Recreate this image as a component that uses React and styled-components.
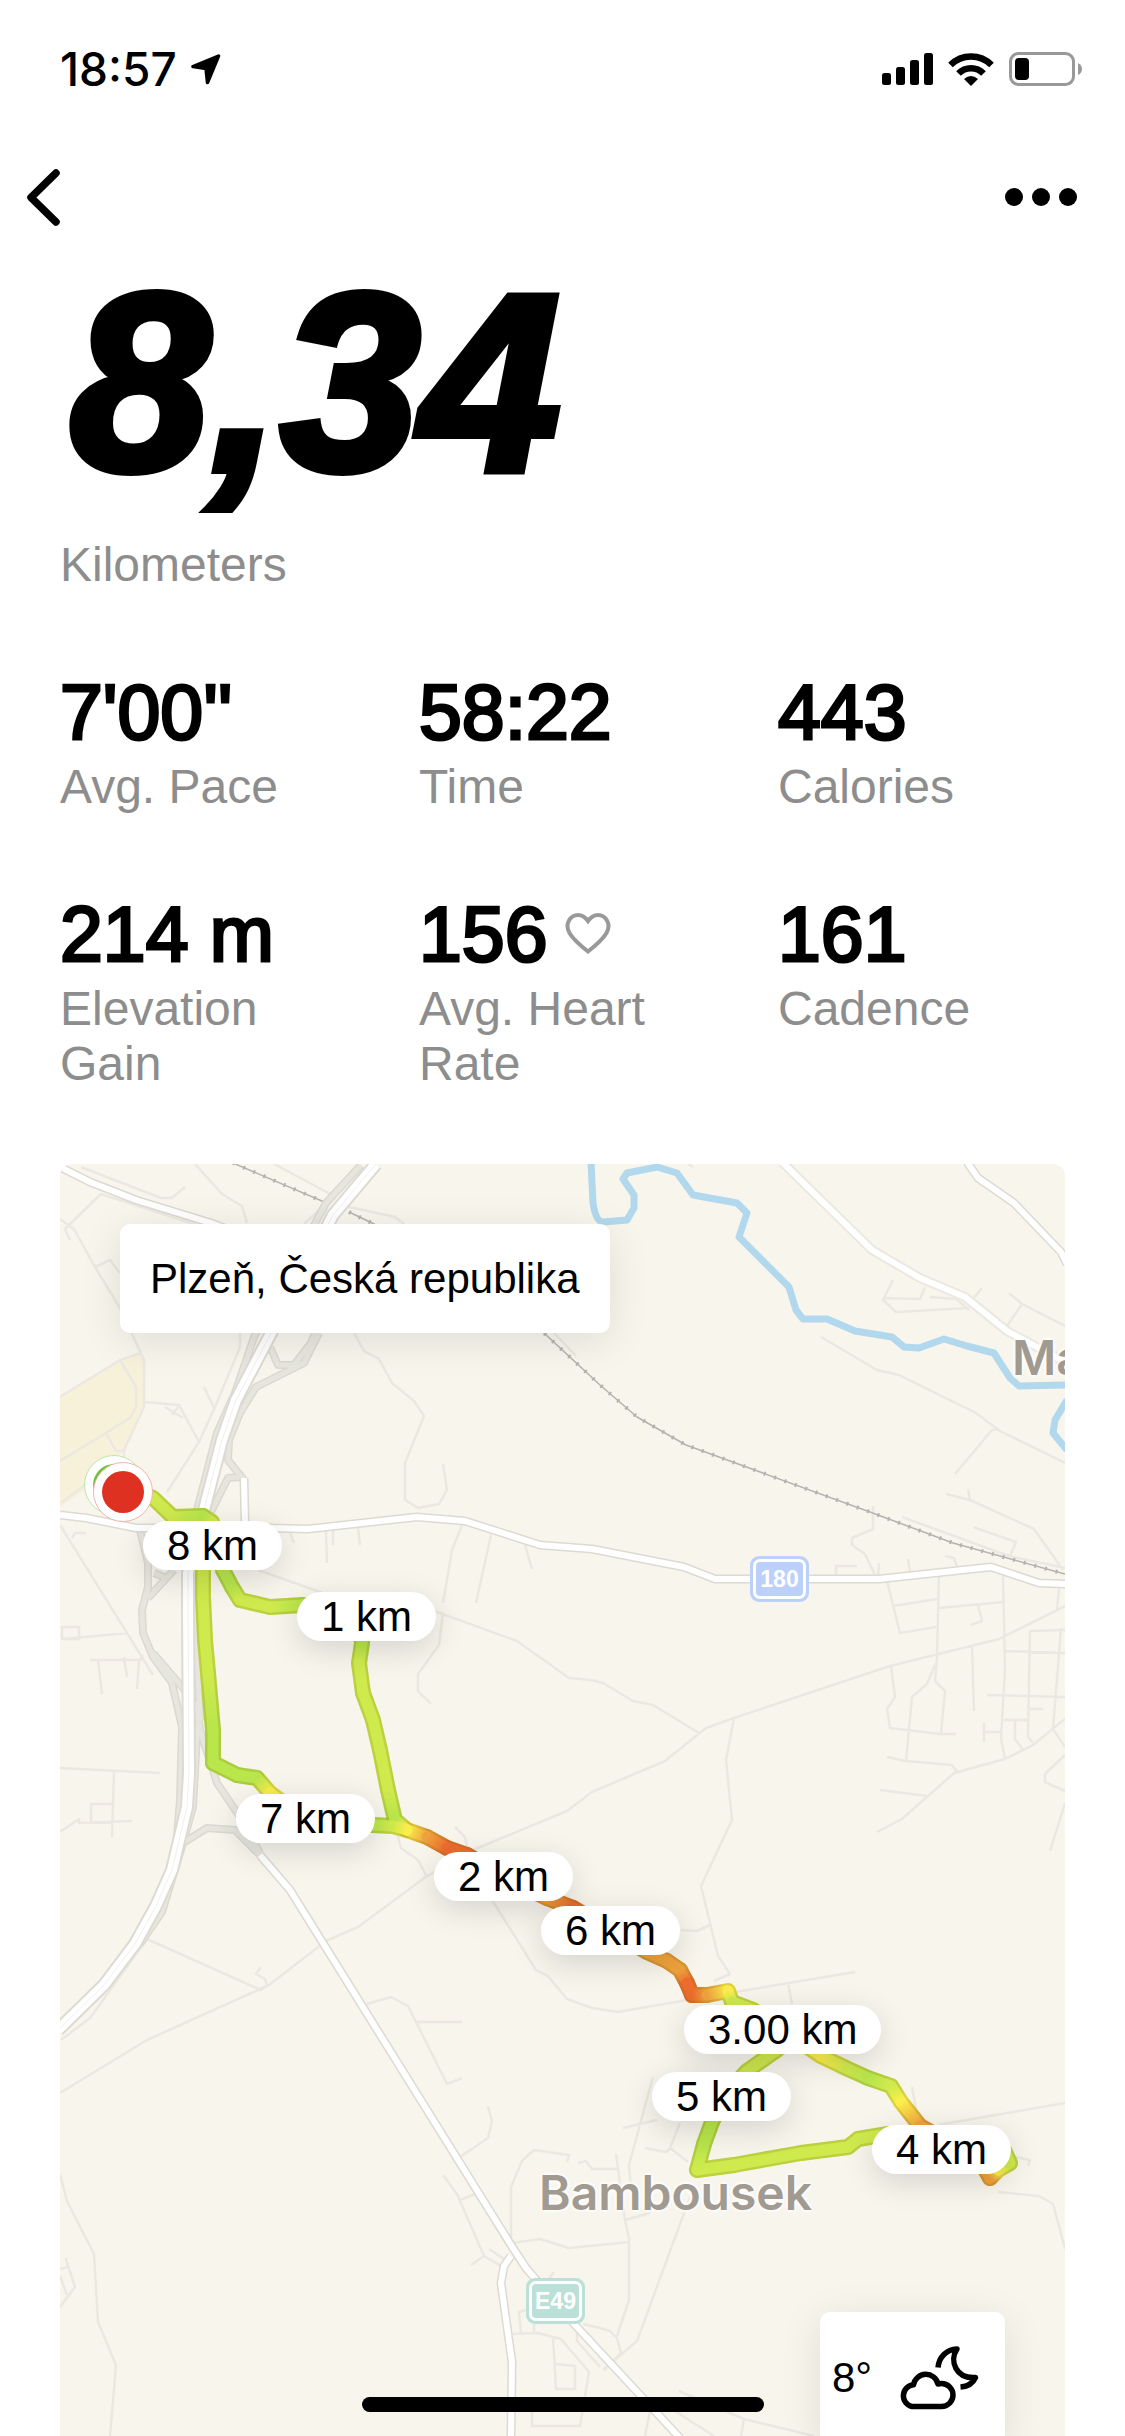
import styled, { createGlobalStyle } from "styled-components";

const GlobalStyle = createGlobalStyle`
  * {
    box-sizing: border-box;
  }
  body {
    margin: 0;
    background: #fff;
    color: #000;
    font-family: "Liberation Sans", Arial, sans-serif;
  }
  button {
    padding: 0;
    border: 0;
    background: none;
    color: inherit;
    cursor: pointer;
  }
`;

const Screen = styled.main`
  display: flex;
  flex-direction: column;
  min-height: 100vh;
`;

const StatusBar = styled.header`
  display: flex;
  align-items: center;
  justify-content: space-between;
  height: 132px;
  padding: 6px 43px 0 60px;
`;

const Clock = styled.div`
  display: flex;
  align-items: center;
  gap: 14px;
  font: 500 46px/52px Inter, sans-serif;
`;

const StatusIcons = styled.div`
  display: flex;
  align-items: center;
  gap: 15px;
`;

const Nav = styled.nav`
  display: flex;
  align-items: center;
  justify-content: space-between;
  height: 130px;
  padding: 0 48px 0 27px;
`;

const NavButton = styled.button`
  display: flex;
  align-items: center;
  gap: 9px;
  height: 60px;
`;

const Dot = styled.span`
  width: 18px;
  height: 18px;
  border-radius: 50%;
  background: #000;
`;

const Summary = styled.section`
  padding: 0 60px;
`;

const Distance = styled.h1`
  margin: 0 0 33px;
  padding-left: 10px;
  font: italic 700 252px/242px "Liberation Sans", Arial, sans-serif;
  -webkit-text-stroke: 8px #000;
`;

const Label = styled.div`
  font-size: 48px;
  line-height: 55px;
  color: #8d8d8d;
`;

const Stats = styled.section`
  display: grid;
  grid-template-columns: repeat(3, 1fr);
  gap: 75px 72px;
  padding: 75px 60px 73px;
`;

const Stat = styled.div`
  display: flex;
  flex-direction: column;
  gap: 2px;
`;

const Value = styled.div`
  display: flex;
  align-items: center;
  gap: 18px;
  font-size: 77px;
  line-height: 90px;
  white-space: nowrap;
  -webkit-text-stroke: 3px #000;
`;

const MapCard = styled.section`
  position: relative;
  margin: 0 60px;
  aspect-ratio: 1005 / 1272;
  border-radius: 12px 12px 0 0;
  background: #f8f5ed;
  overflow: hidden;
`;

const MapDrawing = styled.svg`
  display: block;
  width: 100%;
  height: 100%;
  fill: none;
  stroke-linejoin: round;
`;

const Place = styled.span`
  position: absolute;
  font: 600 48px/56px Inter, sans-serif;
  color: #a09a91;
  text-shadow: 0 0 4px #fff, 0 0 4px #fff, 0 0 4px #fff;
`;

const Shield = styled.span`
  position: absolute;
  width: 59px;
  height: 46px;
  padding: 3px;
  border-radius: 9px;
  background: ${({ $color }) => $color};

  span {
    display: block;
    height: 40px;
    border: 3px solid #fff;
    border-radius: 7px;
    font: 700 23px/34px "Liberation Sans Narrow", "Liberation Sans", sans-serif;
    color: #fff;
    text-align: center;
  }
`;

const Pin = styled.span`
  position: absolute;
  padding: 0 24px;
  border-radius: 26px;
  background: #fff;
  box-shadow: 0 8px 32px rgba(0, 0, 0, 0.14);
  font-size: 42px;
  line-height: 49px;
  white-space: nowrap;
`;

const Location = styled.div`
  position: absolute;
  top: 60px;
  left: 60px;
  padding: 30px;
  border-radius: 10px;
  background: #fff;
  box-shadow: 0 8px 40px rgba(0, 0, 0, 0.1);
  font-size: 42px;
  line-height: 49px;
`;

const Weather = styled.div`
  position: absolute;
  right: 60px;
  bottom: -8px;
  display: flex;
  align-items: center;
  justify-content: space-between;
  width: 185px;
  height: 132px;
  padding: 0 26px 0 12px;
  border-radius: 10px;
  background: #fff;
  box-shadow: 0 8px 40px rgba(0, 0, 0, 0.1);
  font-size: 42px;
`;

const HomeIndicator = styled.div`
  position: fixed;
  bottom: 24px;
  left: 50%;
  width: 402px;
  height: 15px;
  margin-left: -201px;
  border-radius: 8px;
  background: #000;
`;

const MAP_WIDTH = 1005;
const MAP_HEIGHT = 1272;

const at = (x, y) => ({
  left: `${(x / MAP_WIDTH) * 100}%`,
  top: `${(y / MAP_HEIGHT) * 100}%`,
});

const stats = [
  { value: "7'00''", label: "Avg. Pace" },
  { value: "58:22", label: "Time" },
  { value: "443", label: "Calories" },
  { value: "214 m", label: "Elevation Gain" },
  { value: "156", label: "Avg. Heart Rate", heart: true },
  { value: "161", label: "Cadence" },
];

const pins = [
  { label: "8 km", x: 83, y: 357 },
  { label: "1 km", x: 237, y: 428 },
  { label: "7 km", x: 176, y: 630 },
  { label: "2 km", x: 374, y: 688 },
  { label: "6 km", x: 481, y: 742 },
  { label: "3.00 km", x: 624, y: 841 },
  { label: "5 km", x: 592, y: 908 },
  { label: "4 km", x: 812, y: 961 },
];

const motorway =
  "M376 1164L333 1215L269 1337L236 1400L222 1440L204 1510L188 1573V1607L189 1773L187 1807L172 1870L156 1906L135 1944L104 1985L58 2030";

const mainRoads = [
  "M58 1166L90 1182L136 1200L211 1223L304 1258",
  "M60 1515L86 1518L136 1528H269L308 1529L417 1517L465 1521L540 1545L592 1549L684 1567L715 1579H879L991 1567L1039 1583L1068 1584",
  "M967 1162L978 1178L1014 1203L1061 1252L1067 1264",
  "M260 1855L290 1890L511 2245L526 2268L576 2326L680 2438",
  "M244 1478L245 1523",
  "M511 2256L504 2266L501 2283L512 2362L511 2438",
];

const ramps = [
  "M361 1165L326 1203L254 1337L235 1393L217 1433L197 1510",
  "M270 1347L278 1365H294L311 1343L315 1333",
  "M319 1333L304 1363L256 1387L240 1413L229 1440L228 1460L244 1480",
  "M240 1477L228 1478L211 1512",
  "M140 1530L148 1563V1587L142 1610L143 1633L153 1657L172 1683L182 1727L180 1800L175 1860",
  "M174 1570L148 1598M154 1573L166 1578",
  "M153 1653L183 1688L197 1707L200 1730L217 1783L240 1817L260 1853",
  "M195 1573L198 1673L200 1717L197 1733L193 1807L183 1843L162 1912L140 1944",
  "M183 1843L207 1828L235 1830L260 1855",
];

const lanes = [
  // north west
  "M195 1164L222 1194L242 1206L247 1223M81 1167L161 1198H172L185 1187M70 1240L65 1229L101 1194L197 1225",
  "M60 1219L74 1229L95 1267L120 1308L138 1347L144 1360V1407L124 1450M95 1267L110 1260L120 1273",
  "M274 1164L336 1197M304 1224L335 1195L361 1165M349 1207L395 1217L404 1224",
  "M240 1333V1347L215 1407L199 1442L167 1492M204 1387L215 1410M145 1402L179 1405L199 1442M165 1407L183 1418M178 1407L172 1415",
  "M60 1397L120 1360L142 1353M120 1360L136 1387V1407L131 1417L106 1433L60 1461M106 1433L116 1451H124V1458M61 1503L94 1478",
  "M354 1333L364 1351L379 1359L392 1383L414 1401L424 1416L405 1463V1500L418 1508L439 1504L447 1490L443 1464M554 1333L576 1356",
  // south of road 180
  "M290 1533L294 1543M326 1530L327 1563M333 1530V1545M358 1527L360 1545M462 1525L452 1550L443 1603M491 1535L476 1603M525 1545L532 1569",
  "M258 1570L323 1593L437 1612L517 1641L569 1678L591 1680L603 1683L633 1701L653 1705L699 1733",
  "M443 1612L439 1645L418 1674V1691L431 1704M60 1525L153 1675M72 1538L75 1533H86",
  "M62 1627H79V1639H62ZM62 1639L128 1633M90 1660H140L143 1655M98 1660L102 1694M124 1657L127 1677M139 1660L137 1689",
  "M60 1768L160 1773M114 1772L112 1837M112 1804H91V1823M60 1832L79 1819V1823L132 1821",
  // north east
  "M688 1164L693 1167M893 1280L883 1300L896 1312L969 1308M883 1298L920 1299L925 1287M930 1297L956 1299L969 1310M982 1288L973 1299",
  "M1009 1293L1022 1304L1065 1326M1022 1304L1007 1326M821 1337L877 1370L899 1375L976 1413L1000 1431L1065 1463M998 1429L992 1430L955 1474",
  "M946 1494L970 1500L1034 1529L1063 1570M968 1489L970 1500M902 1517L1009 1556L1065 1568M973 1527L1016 1542L1010 1556",
  "M873 1506V1529L852 1538V1545L865 1554L876 1577M836 1577V1566H857M879 1563L878 1577M908 1559L910 1572M945 1556L954 1558L957 1567",
  // east
  "M1065 1606L999 1639L890 1666L734 1718L706 1728L665 1761L592 1792L567 1811L473 1850L427 1876L358 1927L326 1941L269 1985L147 2040L60 2093",
  "M734 1718L726 1760L732 1820L701 1886L718 1956L730 1974L714 1981M681 1930L697 1931L710 1925",
  "M887 1581L900 1633L936 1627M893 1606L937 1599M939 1570L937 1657L935 1681L945 1691L941 1734M935 1665L927 1684L912 1697L906 1761",
  "M891 1666L895 1697L887 1709L890 1728L940 1734H956M887 1757L906 1761L952 1765L957 1772",
  "M877 1832L902 1819L954 1773L1005 1759L1033 1745L1065 1719M880 1790L927 1796",
  "M1003 1573L1005 1670L1001 1738L1005 1759M939 1608L1003 1602M978 1605L982 1621L971 1625M972 1646L974 1711M987 1695L1065 1697M1005 1651L1065 1653",
  "M1065 1630L1030 1631L1028 1737L1033 1743M1061 1628L1053 1729L1065 1747M1028 1709H1043M1004 1720H1028M1015 1720V1739L1024 1751",
  "M984 1723V1742M984 1732H1001M1065 1755L1045 1774V1782L1065 1791M1065 1803L1050 1851M1059 1588L1057 1610",
  // around Bambousek
  "M397 1833L401 1848L418 1860L427 1877M455 1827L465 1837L467 1847M492 1900L536 1970L548 1976L567 1999L592 2008L618 2012L687 2000L855 1972M788 1983L792 2004",
  "M367 2004L391 1997L408 2006L447 2084L462 2078M417 2022H462M488 2106L492 2121L488 2138L460 2157",
  "M567 2162L569 2155L534 2150L522 2161L511 2187V2242M578 2163L586 2161L592 2169H617M616 2154L625 2220L629 2238V2300L617 2336",
  "M653 2077L629 2165L631 2190M623 2128L657 2120M680 2123L670 2148L688 2162M645 2148L666 2152L672 2147M690 2197L637 2341L603 2370M625 2220L650 2213",
  "M513 2243L540 2239L569 2248L600 2245L629 2242M600 2328L610 2331L617 2338L621 2353L604 2370",
  "M938 2125L1065 2103M912 2087L916 2109M998 2192L1039 2196L1053 2204L1065 2249M1015 2157L1030 2160L1028 2166",
  // south
  "M679 2391L744 2419L814 2436M744 2419L741 2436M650 2411L645 2436M675 2411L714 2436",
  "M147 1939L261 1990L267 1986L265 1979L256 1974L261 1967M147 1939L90 2018L61 2040",
  "M60 2174L67 2201L94 2254L98 2322L116 2365L110 2436M60 2269L68 2267L66 2259L75 2287L60 2307M60 2276L67 2295",
  "M443 2175L457 2194L484 2256L501 2266M471 2265L484 2256M460 2200L475 2194M489 2249L504 2259",
  "M513 2334L538 2333L561 2339L589 2372L580 2426H532V2412M553 2338L556 2389H575V2366L555 2364",
  "M521 2334L519 2312L526 2310M534 2324V2333M577 2326V2341L600 2367M583 2324L600 2328M554 2272L549 2279",
];

const river =
  "M591 1162L593 1203Q596 1222 603 1222L627 1220L634 1208V1195L623 1179L627 1173L657 1167L677 1173L693 1195L737 1203L747 1213L739 1237L762 1260L789 1287L796 1310L803 1319H827L855 1331L892 1337L904 1347L919 1348L944 1339L967 1346L994 1353L1010 1378L1019 1386L1067 1385M1067 1400L1055 1420L1053 1433L1067 1450";

const railway =
  "M233 1163L329 1204M349 1212L372 1223L470 1275L544 1333L600 1385L637 1417L686 1445L870 1512L953 1543L1065 1574";

// pace colours, from fast to slow
const G = "#b8e64b";
const L = "#cfea4d";
const Y = "#fbee4c";
const O = "#efa23c";
const R = "#eb6c2d";

const tracks = [
  [
    [123, 1485, L], [153, 1498, L], [173, 1517, L], [203, 1516, G], [212, 1522, L],
    [223, 1570, G], [232, 1587, G], [240, 1600, L], [270, 1607, L], [303, 1605, G],
    [360, 1625, G], [362, 1643, G], [359, 1663, L], [363, 1693, L], [373, 1720, L],
    [380, 1750, L], [388, 1790, L], [395, 1820, G], [407, 1830, Y], [427, 1837, O],
    [447, 1848, R], [467, 1855, R], [510, 1880, R], [547, 1898, O], [573, 1908, R],
    [610, 1930, O], [647, 1952, O], [667, 1961, O], [680, 1970, O], [687, 1983, R],
    [692, 1995, R], [707, 1995, O], [728, 1991, Y], [732, 2002, L], [753, 2010, L],
    [821, 2056, Y], [848, 2069, L], [868, 2078, G], [891, 2086, L], [901, 2102, Y],
    [920, 2126, O], [980, 2160, O], [990, 2178, O], [998, 2170, Y], [1010, 2163, L],
    [1004, 2150, L], [888, 2134, L], [858, 2139, L], [848, 2147, L], [801, 2153, L],
    [734, 2165, L], [697, 2170, L], [704, 2144, G], [712, 2122, G], [725, 2095, L],
    [747, 2071, L], [774, 2052, L], [790, 2040, Y],
  ],
  [
    [203, 1530, L], [203, 1597, L], [205, 1640, L], [208, 1673, L], [213, 1730, G],
    [213, 1763, G], [237, 1775, G], [257, 1778, G], [270, 1793, Y], [300, 1815, L],
    [373, 1825, G], [393, 1826, L], [407, 1830, Y],
  ],
];

const segments = tracks.flatMap((points, track) =>
  points.slice(1).map(([x2, y2, to], i) => {
    const [x1, y1, from] = points[i];
    return { id: `pace-${track}-${i}`, x1, y1, x2, y2, from, to };
  })
);

const Route = () => (
  <g strokeLinecap="round">
    <defs>
      {segments.map(({ id, x1, y1, x2, y2, from, to }) => (
        <linearGradient key={id} id={id} gradientUnits="userSpaceOnUse" x1={x1} y1={y1} x2={x2} y2={y2}>
          <stop offset="0" stopColor={from} />
          <stop offset="1" stopColor={to} />
        </linearGradient>
      ))}
    </defs>
    {segments.map(({ id, x1, y1, x2, y2 }) => (
      <path key={id} d={`M${x1} ${y1}L${x2} ${y2}`} stroke={`url(#${id})`} strokeWidth="16" />
    ))}
    <g stroke="#7a6a10" strokeOpacity="0.2" strokeWidth="16">
      {tracks.map((points, i) => (
        <polyline key={i} points={points.map(([x, y]) => `${x},${y}`).join(" ")} />
      ))}
    </g>
    {segments.map(({ id, x1, y1, x2, y2 }) => (
      <path key={id} d={`M${x1} ${y1}L${x2} ${y2}`} stroke={`url(#${id})`} strokeWidth="11" />
    ))}
  </g>
);

const Roads = ({ paths, casing, color, width, edge = 4 }) => (
  <>
    <path d={paths.join("")} stroke={casing} strokeWidth={width + edge} />
    <path d={paths.join("")} stroke={color} strokeWidth={width} />
  </>
);

const RouteMap = () => (
  <MapDrawing viewBox="60 1164 1005 1272" preserveAspectRatio="xMinYMin slice" aria-hidden="true">
    <path
      fill="#f8f1da"
      d="M60 1397L117 1362L138 1352L144 1360V1407L124 1450L97 1480L67 1503L60 1507Z"
    />
    <path d={lanes.join("")} stroke="#ebe8e1" strokeWidth="2.5" />
    <path d={river} stroke="#b1d8ec" strokeWidth="7" />
    <path d={railway} stroke="#b4b3b0" strokeWidth="1.5" />
    <path d={railway} stroke="#b4b3b0" strokeWidth="4" strokeDasharray="2 9" />
    <Roads paths={ramps} casing="#dbd9d1" color="#e7e6de" width={5} edge={3} />
    <Roads
      paths={["M782 1162L872 1250L920 1278L965 1297L1007 1331L1067 1363"]}
      casing="#ebe8e0"
      color="#fff"
      width={6}
    />
    <Roads paths={mainRoads} casing="#dcdad2" color="#fff" width={6} edge={3} />
    <Roads paths={[motorway]} casing="#dcdad2" color="#fff" width={10} />
    <path d={motorway} stroke="#f1f0ec" strokeWidth="1" />
    <Route />
    <circle cx="114" cy="1485" r="29.5" fill="#fff" stroke="#b9e8a4" />
    <circle cx="114" cy="1485" r="21" fill="#6cc539" />
    <circle cx="123" cy="1492" r="29.5" fill="#fff" stroke="#f2b3ae" />
    <circle cx="123" cy="1492" r="21" fill="#de3121" />
  </MapDrawing>
);

const LocationArrow = () => (
  <svg width="30" height="31" viewBox="0 0 30 31" aria-hidden="true">
    <path
      d="M27.5 2L2 12.5L15 14.5L16.5 28.5Z"
      stroke="#000"
      strokeWidth="3.5"
      strokeLinejoin="round"
    />
  </svg>
);

const Signal = () => (
  <svg width="51" height="32" viewBox="0 0 51 32" aria-label="Signal">
    <rect y="20" width="9" height="12" rx="2.5" />
    <rect x="14" y="14" width="9" height="18" rx="2.5" />
    <rect x="28" y="7" width="9" height="25" rx="2.5" />
    <rect x="42" width="9" height="32" rx="2.5" />
  </svg>
);

const Wifi = () => (
  <svg width="46" height="33" viewBox="0 0 46 33" aria-label="Wi-Fi">
    <g fill="none" stroke="#000" strokeWidth="6.5">
      <path d="M2.5 12A29 29 0 0 1 43.5 12" />
      <path d="M10.5 20.5A17.5 17.5 0 0 1 35.5 20.5" />
    </g>
    <path d="M16 26Q23 20 30 26L23 33Z" />
  </svg>
);

const Battery = () => (
  <svg width="73" height="34" viewBox="0 0 73 34" aria-label="Battery">
    <rect x="1.5" y="1.5" width="63" height="31" rx="8" fill="none" stroke="#999" strokeWidth="3" />
    <rect x="6" y="6" width="14" height="22" rx="4" />
    <path d="M69 11Q73 13 73 17T69 23Z" fill="#999" />
  </svg>
);

const Heart = () => (
  <svg width="46" height="44" viewBox="0 0 46 44" aria-hidden="true">
    <path
      d="M23 39.5C16 34 8 27 4.5 21C2 16.5 2 12 4 8.5C6 5 9.5 3 13 3C17.5 3 20.5 5.5 23 9C25.5 5.5 28.5 3 33 3C36.5 3 40 5 42 8.5C44 12 44 16.5 41.5 21C38 27 30 34 23 39.5Z"
      fill="none"
      stroke="#999"
      strokeWidth="4"
    />
  </svg>
);

const CloudMoon = () => (
  <svg width="80" height="64" viewBox="0 0 80 64" aria-label="Partly cloudy night">
    <g fill="none" stroke="#000" strokeWidth="5.5" strokeLinejoin="round">
      <path d="M13 60.5H42.5A11.5 11.5 0 0 0 42.5 37.5C41.5 37.5 40.5 37.7 39 38A12.5 12.5 0 0 0 14.5 38.8A11 11 0 0 0 13 60.5Z" />
      <path d="M39 21.5C40 11 47.5 3.5 58 3C50 15 57 33 76.5 31.5C74 37 68.5 40.5 61.5 41" />
    </g>
  </svg>
);

const App = () => (
  <>
    <GlobalStyle />
    <Screen>
      <StatusBar>
        <Clock>
          18:57
          <LocationArrow />
        </Clock>
        <StatusIcons>
          <Signal />
          <Wifi />
          <Battery />
        </StatusIcons>
      </StatusBar>
      <Nav>
        <NavButton type="button" aria-label="Back">
          <svg width="33" height="57" viewBox="0 0 33 57">
            <path
              d="M29 4L4 28.5L29 53"
              fill="none"
              stroke="#000"
              strokeWidth="7.5"
              strokeLinecap="round"
              strokeLinejoin="round"
            />
          </svg>
        </NavButton>
        <NavButton type="button" aria-label="More">
          <Dot />
          <Dot />
          <Dot />
        </NavButton>
      </Nav>
      <Summary>
        <Distance>8,34</Distance>
        <Label>Kilometers</Label>
      </Summary>
      <Stats>
        {stats.map(({ value, label, heart }) => (
          <Stat key={label}>
            <Value>
              {value}
              {heart && <Heart />}
            </Value>
            <Label>{label}</Label>
          </Stat>
        ))}
      </Stats>
      <MapCard>
        <RouteMap />
        <Place style={at(952, 166)}>Ma</Place>
        <Place style={at(479, 1001)}>Bambousek</Place>
        <Shield $color="#bbd1fb" style={at(690, 392)}>
          <span>180</span>
        </Shield>
        <Shield $color="#bbe0d8" style={at(466, 1114)}>
          <span>E49</span>
        </Shield>
        {pins.map(({ label, x, y }) => (
          <Pin key={label} style={at(x, y)}>
            {label}
          </Pin>
        ))}
        <Location>Plzeň, Česká republika</Location>
        <Weather>
          8°
          <CloudMoon />
        </Weather>
      </MapCard>
    </Screen>
    <HomeIndicator />
  </>
);

export default App;
